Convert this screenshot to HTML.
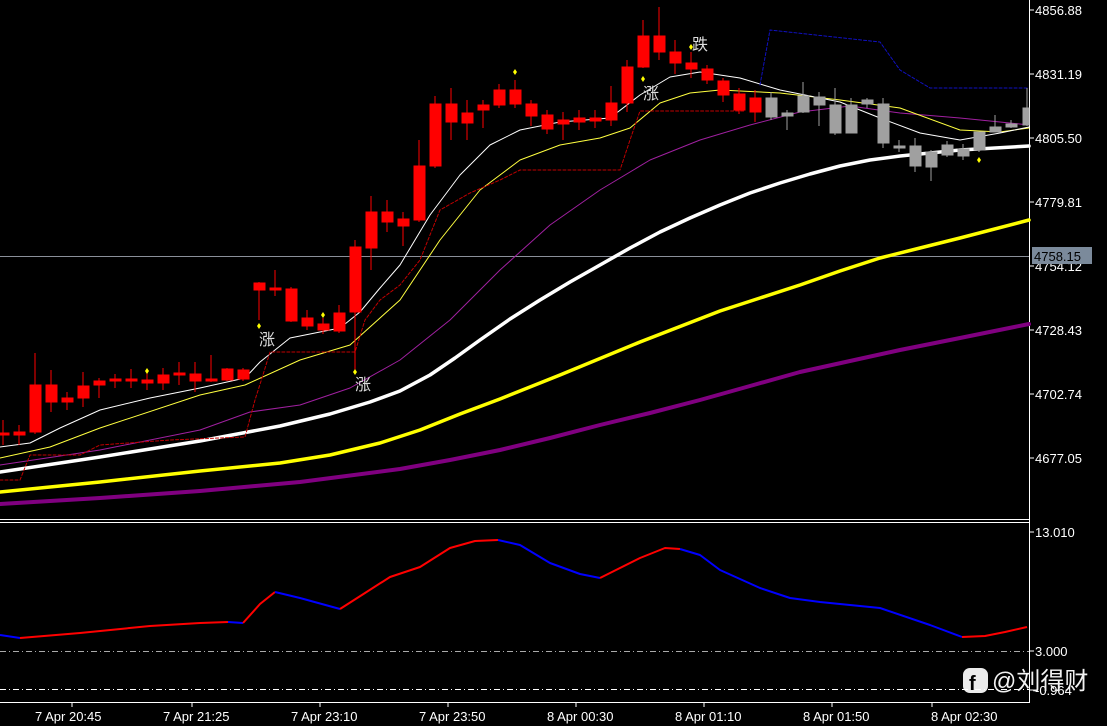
<!DOCTYPE html><html><head><meta charset="utf-8"><style>
body{margin:0;background:#000;width:1107px;height:726px;overflow:hidden}
svg{display:block}
text{font-family:"Liberation Sans","Noto Sans CJK SC",sans-serif;fill:#fff}
</style></head><body>
<svg width="1107" height="726" viewBox="0 0 1107 726">
<rect width="1107" height="726" fill="#000"/>
<line x1="1029.5" y1="0" x2="1029.5" y2="702" stroke="#fff"/>
<line x1="0" y1="519.5" x2="1029" y2="519.5" stroke="#fff"/>
<line x1="0" y1="522.5" x2="1029" y2="522.5" stroke="#fff"/>
<line x1="0" y1="702.5" x2="1030" y2="702.5" stroke="#fff"/>
<line x1="0" y1="256.5" x2="1029" y2="256.5" stroke="#8a8f99"/>
<g font-size="13">
<g stroke="#fff"><line x1="1030" y1="10" x2="1034" y2="10"/><line x1="1030" y1="74" x2="1034" y2="74"/><line x1="1030" y1="138" x2="1034" y2="138"/><line x1="1030" y1="202" x2="1034" y2="202"/><line x1="1030" y1="266" x2="1034" y2="266"/><line x1="1030" y1="330" x2="1034" y2="330"/><line x1="1030" y1="394" x2="1034" y2="394"/><line x1="1030" y1="458" x2="1034" y2="458"/><line x1="1030" y1="532" x2="1034" y2="532"/><line x1="1030" y1="651" x2="1034" y2="651"/><line x1="1030" y1="690" x2="1034" y2="690"/></g>
<text x="1035" y="15">4856.88</text><text x="1035" y="79">4831.19</text><text x="1035" y="143">4805.50</text><text x="1035" y="207">4779.81</text><text x="1035" y="271">4754.12</text><text x="1035" y="335">4728.43</text><text x="1035" y="399">4702.74</text><text x="1035" y="463">4677.05</text>
<rect x="1032" y="247" width="60" height="17" fill="#7b8a9b"/><text x="1034" y="261" style="fill:#000">4758.15</text>
<text x="1035" y="537">13.010</text><text x="1035" y="656">3.000</text><text x="1035" y="695">-0.964</text>
</g>
<g fill="none" stroke-linejoin="round" stroke-linecap="round">
<polyline stroke="#800080" stroke-width="4" points="0,504 100,498 200,491 300,482 400,469 450,460 500,450 550,438 600,425 650,413 700,400 750,386 800,372 850,361 900,350 960,338 1029,324"/>
<polyline stroke="#ffff00" stroke-width="3.5" points="0,492 100,482 200,471 280,463 330,455 380,443 420,430 460,414 500,399 560,375 640,342 720,311 760,298 800,285 840,271 880,258 920,248 960,238 1029,220"/>
<polyline stroke="#fff" stroke-width="3.5" points="0,472 100,457 200,441 280,426 330,414 370,402 400,391 430,375 455,358 480,340 510,319 540,300 570,282 600,265 630,248 660,232 690,218 720,205 750,193 780,183 810,174 840,166 870,160 900,156 960,150 1029,146"/>
<polyline stroke="#a020a0" stroke-width="1" points="0,465 100,450 200,430 250,412 300,405 350,388 400,360 450,320 500,270 550,225 600,190 650,160 700,140 750,125 800,112 850,106 900,113 960,118 1000,122 1029,125"/>
<polyline stroke="#ffff40" stroke-width="1" points="0,458 50,447 100,428 200,395 245,385 300,360 350,345 400,300 440,240 480,190 520,160 560,145 600,138 630,128 660,103 690,93 720,90 780,93 840,100 900,108 960,130 1000,132 1029,128"/>
<polyline stroke="#fff" stroke-width="1" points="0,447 30,443 60,428 100,410 150,398 200,388 245,378 260,362 290,338 340,328 360,312 380,288 400,265 430,215 460,175 490,145 520,130 560,122 610,118 640,95 670,77 700,72 740,78 780,90 840,102 880,118 920,133 960,140 1000,133 1029,127"/>
<polyline stroke="#c00000" stroke-width="1" stroke-dasharray="3,2" points="0,480 20,480 30,455 80,455 100,445 170,440 245,437 255,400 262,378 270,352 355,352 365,320 380,300 400,285 420,260 440,210 470,193 500,180 520,170 620,170 630,140 640,111 745,111"/>
<polyline stroke="#1010c0" stroke-width="1" stroke-dasharray="3,2" points="760,85 770,30 880,42 900,70 930,88 1029,88"/>
</g>
<g stroke="#ff0000" fill="#ff0000">
<line x1="3" y1="420" x2="3" y2="445"/><rect x="-2" y="433" width="11" height="2"/>
<line x1="19" y1="425" x2="19" y2="445"/><rect x="14" y="432" width="11" height="3"/>
<line x1="35" y1="353" x2="35" y2="434"/><rect x="30" y="385" width="11" height="47"/>
<line x1="51" y1="370" x2="51" y2="412"/><rect x="46" y="385" width="11" height="17"/>
<line x1="67" y1="392" x2="67" y2="410"/><rect x="62" y="398" width="11" height="4"/>
<line x1="83" y1="372" x2="83" y2="407"/><rect x="78" y="386" width="11" height="12"/>
<line x1="99" y1="378" x2="99" y2="398"/><rect x="94" y="381" width="11" height="4"/>
<line x1="115" y1="374" x2="115" y2="388"/><rect x="110" y="379" width="11" height="2"/>
<line x1="131" y1="369" x2="131" y2="388"/><rect x="126" y="379" width="11" height="2"/>
<line x1="147" y1="373" x2="147" y2="390"/><rect x="142" y="380" width="11" height="3"/>
<line x1="163" y1="368" x2="163" y2="390"/><rect x="158" y="375" width="11" height="8"/>
<line x1="179" y1="362" x2="179" y2="385"/><rect x="174" y="373" width="11" height="2"/>
<line x1="195" y1="362" x2="195" y2="392"/><rect x="190" y="374" width="11" height="7"/>
<line x1="211" y1="355" x2="211" y2="382"/><rect x="206" y="379" width="11" height="2"/>
<line x1="227" y1="368" x2="227" y2="381"/><rect x="222" y="369" width="11" height="11"/>
<line x1="243" y1="368" x2="243" y2="381"/><rect x="238" y="370" width="11" height="9"/>
<line x1="259" y1="282" x2="259" y2="320"/><rect x="254" y="283" width="11" height="7"/>
<line x1="275" y1="270" x2="275" y2="296"/><rect x="270" y="288" width="11" height="2"/>
<line x1="291" y1="287" x2="291" y2="322"/><rect x="286" y="289" width="11" height="32"/>
<line x1="307" y1="310" x2="307" y2="330"/><rect x="302" y="318" width="11" height="8"/>
<line x1="323" y1="318" x2="323" y2="334"/><rect x="318" y="324" width="11" height="6"/>
<line x1="339" y1="305" x2="339" y2="333"/><rect x="334" y="313" width="11" height="18"/>
<line x1="355" y1="240" x2="355" y2="372"/><rect x="350" y="247" width="11" height="65"/>
<line x1="371" y1="196" x2="371" y2="270"/><rect x="366" y="212" width="11" height="36"/>
<line x1="387" y1="200" x2="387" y2="232"/><rect x="382" y="212" width="11" height="10"/>
<line x1="403" y1="212" x2="403" y2="246"/><rect x="398" y="219" width="11" height="7"/>
<line x1="419" y1="140" x2="419" y2="222"/><rect x="414" y="166" width="11" height="54"/>
<line x1="435" y1="96" x2="435" y2="168"/><rect x="430" y="104" width="11" height="62"/>
<line x1="451" y1="88" x2="451" y2="140"/><rect x="446" y="104" width="11" height="18"/>
<line x1="467" y1="100" x2="467" y2="140"/><rect x="462" y="113" width="11" height="10"/>
<line x1="483" y1="100" x2="483" y2="128"/><rect x="478" y="105" width="11" height="5"/>
<line x1="499" y1="84" x2="499" y2="108"/><rect x="494" y="90" width="11" height="15"/>
<line x1="515" y1="80" x2="515" y2="108"/><rect x="510" y="90" width="11" height="14"/>
<line x1="531" y1="100" x2="531" y2="126"/><rect x="526" y="104" width="11" height="12"/>
<line x1="547" y1="110" x2="547" y2="134"/><rect x="542" y="115" width="11" height="14"/>
<line x1="563" y1="112" x2="563" y2="140"/><rect x="558" y="120" width="11" height="4"/>
<line x1="579" y1="110" x2="579" y2="130"/><rect x="574" y="118" width="11" height="4"/>
<line x1="595" y1="110" x2="595" y2="128"/><rect x="590" y="118" width="11" height="3"/>
<line x1="611" y1="86" x2="611" y2="126"/><rect x="606" y="103" width="11" height="17"/>
<line x1="627" y1="60" x2="627" y2="112"/><rect x="622" y="67" width="11" height="36"/>
<line x1="643" y1="20" x2="643" y2="68"/><rect x="638" y="36" width="11" height="31"/>
<line x1="659" y1="7" x2="659" y2="60"/><rect x="654" y="36" width="11" height="16"/>
<line x1="675" y1="40" x2="675" y2="74"/><rect x="670" y="52" width="11" height="11"/>
<line x1="691" y1="52" x2="691" y2="78"/><rect x="686" y="63" width="11" height="6"/>
<line x1="707" y1="65" x2="707" y2="84"/><rect x="702" y="69" width="11" height="11"/>
<line x1="723" y1="78" x2="723" y2="102"/><rect x="718" y="81" width="11" height="14"/>
<line x1="739" y1="88" x2="739" y2="114"/><rect x="734" y="94" width="11" height="16"/>
<line x1="755" y1="90" x2="755" y2="122"/><rect x="750" y="98" width="11" height="14"/>
</g>
<g stroke="#a0a0a0" fill="#a0a0a0">
<line x1="771" y1="92" x2="771" y2="120"/><rect x="766" y="98" width="11" height="19"/>
<line x1="787" y1="110" x2="787" y2="130"/><rect x="782" y="113" width="11" height="3"/>
<line x1="803" y1="82" x2="803" y2="113"/><rect x="798" y="96" width="11" height="16"/>
<line x1="819" y1="92" x2="819" y2="126"/><rect x="814" y="97" width="11" height="8"/>
<line x1="835" y1="88" x2="835" y2="135"/><rect x="830" y="105" width="11" height="28"/>
<line x1="851" y1="98" x2="851" y2="133"/><rect x="846" y="105" width="11" height="28"/>
<line x1="867" y1="98" x2="867" y2="108"/><rect x="862" y="100" width="11" height="4"/>
<line x1="883" y1="98" x2="883" y2="148"/><rect x="878" y="104" width="11" height="39"/>
<line x1="899" y1="140" x2="899" y2="152"/><rect x="894" y="146" width="11" height="2"/>
<line x1="915" y1="138" x2="915" y2="172"/><rect x="910" y="146" width="11" height="20"/>
<line x1="931" y1="150" x2="931" y2="181"/><rect x="926" y="152" width="11" height="15"/>
<line x1="947" y1="141" x2="947" y2="157"/><rect x="942" y="145" width="11" height="10"/>
<line x1="963" y1="144" x2="963" y2="160"/><rect x="958" y="149" width="11" height="7"/>
<line x1="979" y1="132" x2="979" y2="152"/><rect x="974" y="132" width="11" height="18"/>
<line x1="995" y1="115" x2="995" y2="132"/><rect x="990" y="127" width="11" height="5"/>
<line x1="1011" y1="120" x2="1011" y2="128"/><rect x="1006" y="124" width="11" height="3"/>
<line x1="1027" y1="88" x2="1027" y2="126"/><rect x="1023" y="108" width="6" height="17"/>
</g>
<g fill="#ffff00">
<path d="M147,368l2,3l-2,3l-2,-3z"/><path d="M259,323l2,3l-2,3l-2,-3z"/><path d="M323,312l2,3l-2,3l-2,-3z"/><path d="M355,369l2,3l-2,3l-2,-3z"/><path d="M515,69l2,3l-2,3l-2,-3z"/><path d="M643,76l2,3l-2,3l-2,-3z"/><path d="M691,44l2,3l-2,3l-2,-3z"/><path d="M979,157l2,3l-2,3l-2,-3z"/>
</g>
<g font-size="16">
<text x="259" y="345" style="fill:#ddd">涨</text><text x="355" y="390" style="fill:#ddd">涨</text><text x="643" y="99" style="fill:#ddd">涨</text><text x="692" y="50" style="fill:#ddd">跌</text>
</g>
<line x1="0" y1="651.5" x2="1029" y2="651.5" stroke="#aaa" stroke-dasharray="6,3,1,3"/>
<line x1="0" y1="689.5" x2="1029" y2="689.5" stroke="#fff" stroke-dasharray="6,3,1,3"/>
<g fill="none" stroke-width="2" stroke-linejoin="round">
<polyline stroke="#0000ff" points="0,635 20,638"/>
<polyline stroke="#ff0000" points="20,638 80,633 150,626 200,623 228,622"/>
<polyline stroke="#0000ff" points="228,622 243,623"/>
<polyline stroke="#ff0000" points="243,623 260,604 275,592"/>
<polyline stroke="#0000ff" points="275,592 300,598 340,609"/>
<polyline stroke="#ff0000" points="340,609 365,593 390,577 420,567 450,548 475,541 498,540"/>
<polyline stroke="#0000ff" points="498,540 520,545 550,563 580,574 600,578"/>
<polyline stroke="#ff0000" points="600,578 640,558 665,548 680,549"/>
<polyline stroke="#0000ff" points="680,549 700,555 720,570 760,588 790,598 820,602 850,605 880,608 930,625 962,637"/>
<polyline stroke="#ff0000" points="962,637 985,636 1005,632 1027,627"/>
</g>
<g stroke="#fff"><line x1="72" y1="702" x2="72" y2="707"/><line x1="192" y1="702" x2="192" y2="707"/><line x1="320" y1="702" x2="320" y2="707"/><line x1="448" y1="702" x2="448" y2="707"/><line x1="576" y1="702" x2="576" y2="707"/><line x1="704" y1="702" x2="704" y2="707"/><line x1="832" y1="702" x2="832" y2="707"/><line x1="932" y1="702" x2="932" y2="707"/></g>
<g font-size="13">
<text x="35" y="721">7 Apr 20:45</text><text x="163" y="721">7 Apr 21:25</text><text x="291" y="721">7 Apr 23:10</text><text x="419" y="721">7 Apr 23:50</text><text x="547" y="721">8 Apr 00:30</text><text x="675" y="721">8 Apr 01:10</text><text x="803" y="721">8 Apr 01:50</text><text x="931" y="721">8 Apr 02:30</text>
</g>
<rect x="963" y="668" width="25" height="25" rx="7" fill="#fff" opacity="0.92"/>
<text x="969" y="690" font-size="20" font-weight="bold" style="fill:#000">f</text>
<text x="992" y="689" font-size="24" style="fill:#f2f2f2">@刘得财</text>
</svg>
</body></html>
